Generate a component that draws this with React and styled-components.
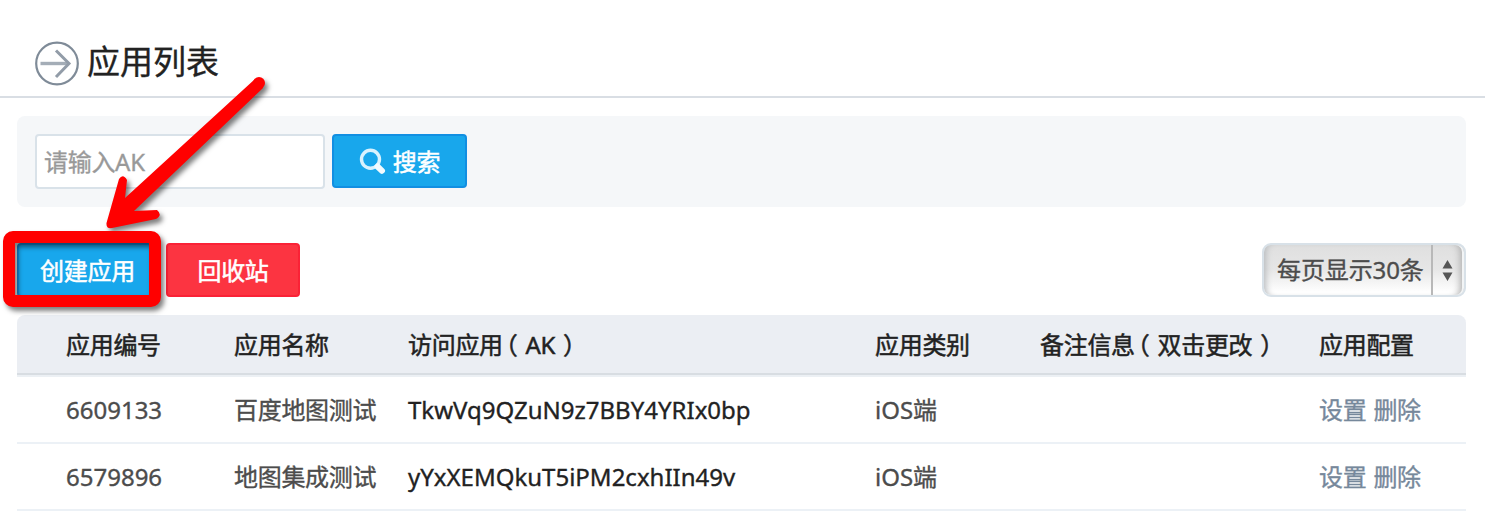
import React from "react";
import styled, { createGlobalStyle } from "styled-components";

const GlobalStyle = createGlobalStyle`
  * { box-sizing: border-box; }
  body {
    margin: 0;
    background: #fff;
    color: #222;
    font-family: "Noto Sans", "Noto Sans CJK SC", sans-serif;
    font-size: 24px;
    line-height: 34px;
    -webkit-text-stroke: 0.35px currentColor;
  }
  button, input { font: inherit; }
`;

const Page = styled.main`
  position: relative;
  width: 1500px;
  height: 524px;
  overflow: hidden;
`;

const Header = styled.header`
  display: flex;
  align-items: center;
  width: 1485px;
  height: 98px;
  padding: 31px 0 0 34px;
  border-bottom: 2px solid #d9dee4;
`;

const Title = styled.h1`
  margin: -4px 0 0 7px;
  font-size: 33px;
  line-height: 44px;
  font-weight: 400;
`;

const Content = styled.div`
  width: 1449px;
  margin: 18px 0 0 17px;
`;

const SearchPanel = styled.form`
  display: flex;
  gap: 7px;
  height: 91px;
  padding: 18px;
  border-radius: 8px;
  background: #f5f7f9;
`;

const AkInput = styled.input`
  width: 290px;
  height: 55px;
  padding: 0 7px 1px;
  border: 2px solid #d9e2e9;
  border-radius: 4px;
  background: #fff;
  letter-spacing: -0.3px;
  outline: none;
  &::placeholder { color: #999; opacity: 1; }
`;

const tones = {
  blue: { fill: "#18a7ec", edge: "#118fe2" },
  red: { fill: "#fc3441", edge: "#fa2236" },
};

const Button = styled.button`
  display: flex;
  align-items: center;
  justify-content: center;
  gap: 7px;
  width: ${(p) => p.$width || 134}px;
  height: 54px;
  padding: 1px 0 0 ${(p) => p.$inset || 0}px;
  border: 2px solid ${(p) => tones[p.$tone].edge};
  border-radius: 4px;
  background: ${(p) => tones[p.$tone].fill};
  color: #fff;
  letter-spacing: -0.3px;
  -webkit-text-stroke: 0.5px #fff;
  white-space: nowrap;
`;

const Toolbar = styled.div`
  display: flex;
  gap: 14px;
  margin-top: 36px;
  height: 54px;
`;

const PageSize = styled.div`
  display: flex;
  width: 204px;
  height: 54px;
  margin-left: auto;
  border: 2px solid #d8e1e8;
  border-radius: 9px;
  background: linear-gradient(#dfdfdf, #e6e6e6 48%, #fff 95%);
  box-shadow: inset 7px 0 6px -5px #b8bbbe, inset -2px 0 #f2f4f5, inset -9px 0 7px -5px #b0b0b0;
  color: #4c4c4c;
`;

const PageSizeLabel = styled.span`
  width: 169px;
  padding: 8px 0 0 13px;
  border-right: 2px solid #b8b8b8;
  letter-spacing: -0.1px;
  white-space: nowrap;
`;

const Stepper = styled.svg`
  margin: 15px 0 0 9px;
`;

const Table = styled.section`
  margin-top: 18px;
`;

const Row = styled.div`
  display: grid;
  grid-template-columns: 168px 174px 467px 165px 279px 1fr;
  align-items: center;
  height: ${(p) => (p.$head ? 62 : 67)}px;
  padding: ${(p) => (p.$head ? "0 0 1px 49px" : "0 0 0 49px")};
  border-bottom: 2px solid ${(p) => (p.$head ? "#ecf0f4" : "#ecf1f6")};
  border-radius: ${(p) => (p.$head ? "8px 8px 0 0" : 0)};
  background: ${(p) => (p.$head ? "#ebeef3" : "#fff")};
  box-shadow: ${(p) => (p.$head ? "inset 0 -2px #d8dde2" : "none")};
  color: ${(p) => (p.$head ? "#222" : "#4c4c4c")};
  -webkit-text-stroke-width: ${(p) => (p.$head ? 0.5 : 0.35)}px;
  white-space: nowrap;
`;

const Cell = styled.span`
  letter-spacing: ${(p) => (p.$cjk ? "-0.3px" : "normal")};
  color: ${(p) => (p.$dark ? "#222" : "inherit")};
`;

const Bracket = styled.span`
  margin: ${(p) => (p.$open ? "0 8px 0 3px" : "0 3px 0 8px")};
  font-feature-settings: "halt";
`;

const Actions = styled.span`
  display: flex;
  gap: 7px;
`;

const Action = styled.a`
  color: #76889b;
  letter-spacing: -0.3px;
`;

const Annotation = styled.svg`
  position: absolute;
  left: 0;
  top: 0;
  pointer-events: none;
  filter: drop-shadow(3px 4px 2.5px rgba(0, 0, 0, 0.5));
`;

const apps = [
  { id: "6609133", name: "百度地图测试", ak: "TkwVq9QZuN9z7BBY4YRIx0bp", type: "iOS端" },
  { id: "6579896", name: "地图集成测试", ak: "yYxXEMQkuT5iPM2cxhIIn49v", type: "iOS端" },
];

function CircleArrow() {
  return (
    <svg width="46" height="46" viewBox="0 0 46 46" fill="none">
      <circle cx="23" cy="22.5" r="20.8" stroke="#7f8b98" strokeWidth="2.2" />
      <path d="M6.5 22.5H35" stroke="#a4adb7" strokeWidth="3.4" />
      <path d="M22 9.5 35 22.5 22 36" stroke="#929ca8" strokeWidth="3" />
    </svg>
  );
}

function Magnifier() {
  return (
    <svg width="27" height="27" viewBox="0 0 27 27" fill="none">
      <circle cx="11.5" cy="11.3" r="9" stroke="#d8f2fe" strokeWidth="3.4" />
      <path d="m18.5 18.5 4.5 4.3" stroke="#f2fbff" strokeWidth="6" strokeLinecap="round" />
    </svg>
  );
}

export default function App() {
  return (
    <Page>
      <GlobalStyle />
      <Header>
        <CircleArrow />
        <Title>应用列表</Title>
      </Header>
      <Content>
        <SearchPanel>
          <AkInput placeholder="请输入AK" />
          <Button type="button" $tone="blue" $width={135}>
            <Magnifier />
            搜索
          </Button>
        </SearchPanel>
        <Toolbar>
          <Button $tone="blue" $width={135} $inset={6}>创建应用</Button>
          <Button $tone="red">回收站</Button>
          <PageSize>
            <PageSizeLabel>每页显示30条</PageSizeLabel>
            <Stepper width="12" height="22" viewBox="0 0 12 22" fill="#555">
              <path d="M5.5 0 10.5 8.5H.5ZM.5 12.5H10.5L5.5 21Z" />
            </Stepper>
          </PageSize>
        </Toolbar>
        <Table>
          <Row $head>
            <Cell $cjk>应用编号</Cell>
            <Cell $cjk>应用名称</Cell>
            <Cell $cjk>访问应用<Bracket $open>（</Bracket>AK<Bracket>）</Bracket></Cell>
            <Cell $cjk>应用类别</Cell>
            <Cell $cjk>备注信息<Bracket $open>（</Bracket>双击更改<Bracket>）</Bracket></Cell>
            <Cell $cjk>应用配置</Cell>
          </Row>
          {apps.map((app) => (
            <Row key={app.id}>
              <Cell>{app.id}</Cell>
              <Cell $cjk>{app.name}</Cell>
              <Cell $dark>{app.ak}</Cell>
              <Cell>{app.type}</Cell>
              <Cell />
              <Actions>
                <Action>设置</Action>
                <Action>删除</Action>
              </Actions>
            </Row>
          ))}
        </Table>
      </Content>
      <Annotation width="320" height="330" viewBox="0 0 320 330">
        <rect x="9" y="237" width="146" height="64" rx="4" fill="none" stroke="#f00" strokeWidth="12" />
        <path
          d="M255 79 125 198 127 180Q123 173 119 179L106.500 223Q106 229 112 228L156 219Q163 215 157 210L134 211 263 88Z"
          fill="#f00"
        />
        <circle cx="259" cy="83" r="6" fill="#f00" />
      </Annotation>
    </Page>
  );
}
